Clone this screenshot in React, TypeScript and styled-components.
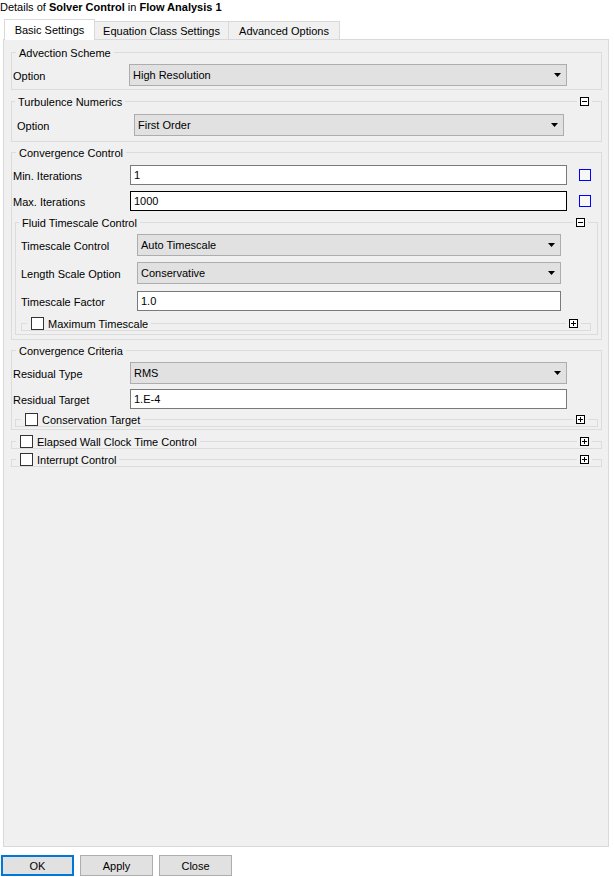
import React from "react";
import styled, { createGlobalStyle } from "styled-components";

const GlobalStyle = createGlobalStyle`
  html, body { margin: 0; padding: 0; background: #ffffff; }
  body {
    font-family: "Liberation Sans", Arial, sans-serif;
    font-size: 11px;
    color: #000000;
    overflow: hidden;
  }
  * { box-sizing: border-box; }
`;

const Page = styled.div`
  width: 614px;
  height: 877px;
  display: flex;
  flex-direction: column;
`;

const Heading = styled.div`
  height: 19px;
  line-height: 14px;
  white-space: nowrap;
  b { font-weight: bold; }
`;

const TabBar = styled.div`
  display: flex;
  align-items: flex-end;
  height: 20px;
  padding-left: 4px;
`;

const Tab = styled.div<{ $active?: boolean; $w: number }>`
  position: relative;
  z-index: ${(p) => (p.$active ? 1 : 0)};
  width: ${(p) => p.$w}px;
  height: ${(p) => (p.$active ? 21 : 18)}px;
  margin-bottom: ${(p) => (p.$active ? -1 : 0)}px;
  margin-left: ${(p) => (p.$active ? 0 : -1)}px;
  padding-bottom: ${(p) => (p.$active ? 1 : 0)}px;
  background: ${(p) => (p.$active ? "#ffffff" : "#f0f0f0")};
  border: 1px solid #d9d9d9;
  border-bottom: none;
  display: flex;
  align-items: center;
  justify-content: center;
  white-space: nowrap;
`;

const Panel = styled.div`
  margin-left: 3px;
  width: 606px;
  height: 808px;
  border: 1px solid #d9d9d9;
  background: #f0f0f0;
  padding: 0 6px 0 7px;
  display: flex;
  flex-direction: column;
`;

const Frame = styled.div<{ $mt?: number; $ml?: number; $mr?: number; $pb?: number }>`
  border: 1px solid #dcdcdc;
  margin: ${(p) => p.$mt ?? 0}px ${(p) => p.$mr ?? 0}px 0 ${(p) => p.$ml ?? 0}px;
  padding-bottom: ${(p) => p.$pb ?? 0}px;
  display: flex;
  flex-direction: column;
`;

const Header = styled.div<{ $ml: number }>`
  display: flex;
  align-items: center;
  justify-content: space-between;
  height: 13px;
  margin: -7px 9px 0 ${(p) => p.$ml}px;
`;

const Caption = styled.span`
  background: #f0f0f0;
  padding: 1px 3px 0;
  height: 13px;
  line-height: 13px;
  white-space: nowrap;
`;

const CheckCaption = styled.label`
  display: flex;
  align-items: center;
  gap: 4px;
  background: #f0f0f0;
  padding: 0 3px 0 4px;
  height: 13px;
  white-space: nowrap;
`;

const CheckText = styled.span`
  line-height: 13px;
  padding-top: 1px;
`;

const CheckBox = styled.span`
  width: 13px;
  height: 13px;
  flex: none;
  background: #ffffff;
  border: 1px solid #333333;
`;

const ToggleWrap = styled.span`
  display: flex;
  align-items: center;
  background: #f0f0f0;
  padding: 0 3px;
  height: 13px;
`;

const Row = styled.div<{ $mt: number; $pl: number; $pr: number }>`
  display: flex;
  align-items: center;
  margin-top: ${(p) => p.$mt}px;
  padding: 0 ${(p) => p.$pr}px 0 ${(p) => p.$pl}px;
`;

const Label = styled.span<{ $w: number }>`
  width: ${(p) => p.$w}px;
  flex: none;
  white-space: nowrap;
  padding-top: 1px;
`;

const Select = styled.div`
  flex: 1;
  height: 22px;
  background: #e1e1e1;
  border: 1px solid #adadad;
  display: flex;
  align-items: center;
  justify-content: space-between;
  padding: 0 5px 0 3px;
  white-space: nowrap;
`;

const TextInput = styled.input<{ $focus?: boolean }>`
  flex: 1;
  min-width: 0;
  height: 20px;
  margin: 0;
  background: #ffffff;
  border: 1px solid ${(p) => (p.$focus ? "#000000" : "#7a7a7a")};
  padding: 0 3px;
  font: inherit;
  color: #000000;
  outline: none;
`;

const BlueBox = styled.span`
  width: 12px;
  height: 12px;
  flex: none;
  margin-left: 12px;
  border: 1px solid #0000ff;
  background: #f7f7f7;
`;

const ButtonRow = styled.div`
  display: flex;
  gap: 6px;
  padding-left: 1px;
  margin-top: 8px;
`;

const PushButton = styled.button<{ $default?: boolean }>`
  width: 73px;
  height: 21px;
  margin: 0;
  padding: 0;
  background: #e1e1e1;
  border: ${(p) => (p.$default ? "2px solid #0078d7" : "1px solid #adadad")};
  font: inherit;
  color: #000000;
`;

const Arrow = () => (
  <svg width="7" height="4" viewBox="0 0 7 4">
    <polygon points="0,0 7,0 3.5,4" fill="#000" />
  </svg>
);

const Toggle = ({ open }: { open: boolean }) => (
  <ToggleWrap>
    <svg width="9" height="9" viewBox="0 0 9 9">
      <rect x="0.5" y="0.5" width="8" height="8" fill="#ffffff" stroke="#000" />
      <line x1="2" y1="4.5" x2="7" y2="4.5" stroke="#000" />
      {!open && <line x1="4.5" y1="2" x2="4.5" y2="7" stroke="#000" />}
    </svg>
  </ToggleWrap>
);

const SelectField = ({ value }: { value: string }) => (
  <Select>
    <span>{value}</span>
    <Arrow />
  </Select>
);

const CollapsedGroup = ({
  title,
  mt,
  ml,
  mr,
  hl,
}: {
  title: string;
  mt: number;
  ml: number;
  mr: number;
  hl: number;
}) => (
  <Frame $mt={mt} $ml={ml} $mr={mr}>
    <Header $ml={hl}>
      <CheckCaption>
        <CheckBox />
        <CheckText>{title}</CheckText>
      </CheckCaption>
      <Toggle open={false} />
    </Header>
  </Frame>
);

export default function App() {
  return (
    <Page>
      <GlobalStyle />
      <Heading>
        Details of <b>Solver Control</b> in <b>Flow Analysis 1</b>
      </Heading>
      <TabBar>
        <Tab $active $w={91}>Basic Settings</Tab>
        <Tab $w={135}>Equation Class Settings</Tab>
        <Tab $w={112}>Advanced Options</Tab>
      </TabBar>
      <Panel>
        {/* Advection Scheme */}
        <Frame $mt={12} $pb={3}>
          <Header $ml={4}>
            <Caption>Advection Scheme</Caption>
          </Header>
          <Row $mt={5} $pl={1} $pr={34}>
            <Label $w={116}>Option</Label>
            <SelectField value="High Resolution" />
          </Row>
        </Frame>

        {/* Turbulence Numerics */}
        <Frame $mt={11} $pb={5}>
          <Header $ml={3}>
            <Caption>Turbulence Numerics</Caption>
            <Toggle open />
          </Header>
          <Row $mt={6} $pl={5} $pr={37}>
            <Label $w={117}>Option</Label>
            <SelectField value="First Order" />
          </Row>
        </Frame>

        {/* Convergence Control */}
        <Frame $mt={10} $pb={4}>
          <Header $ml={4}>
            <Caption>Convergence Control</Caption>
          </Header>
          <Row $mt={6} $pl={1} $pr={10}>
            <Label $w={117}>Min. Iterations</Label>
            <TextInput readOnly value="1" />
            <BlueBox />
          </Row>
          <Row $mt={6} $pl={1} $pr={10}>
            <Label $w={117}>Max. Iterations</Label>
            <TextInput readOnly $focus value="1000" />
            <BlueBox />
          </Row>

          <Frame $mt={11} $ml={3} $mr={3} $pb={3}>
            <Header $ml={3}>
              <Caption>Fluid Timescale Control</Caption>
              <Toggle open />
            </Header>
            <Row $mt={5} $pl={5} $pr={36}>
              <Label $w={116}>Timescale Control</Label>
              <SelectField value="Auto Timescale" />
            </Row>
            <Row $mt={6} $pl={5} $pr={36}>
              <Label $w={116}>Length Scale Option</Label>
              <SelectField value="Conservative" />
            </Row>
            <Row $mt={7} $pl={5} $pr={36}>
              <Label $w={116}>Timescale Factor</Label>
              <TextInput readOnly value="1.0" />
            </Row>
            <CollapsedGroup title="Maximum Timescale" mt={12} ml={5} mr={6} hl={5} />
          </Frame>
        </Frame>

        {/* Convergence Criteria */}
        <Frame $mt={10} $pb={2}>
          <Header $ml={4}>
            <Caption>Convergence Criteria</Caption>
          </Header>
          <Row $mt={5} $pl={1} $pr={34}>
            <Label $w={117}>Residual Type</Label>
            <SelectField value="RMS" />
          </Row>
          <Row $mt={5} $pl={1} $pr={34}>
            <Label $w={117}>Residual Target</Label>
            <TextInput readOnly value="1.E-4" />
          </Row>
          <CollapsedGroup title="Conservation Target" mt={10} ml={3} mr={3} hl={5} />
        </Frame>

        <CollapsedGroup title="Elapsed Wall Clock Time Control" mt={11} ml={0} mr={0} hl={4} />
        <CollapsedGroup title="Interrupt Control" mt={10} ml={0} mr={0} hl={4} />
      </Panel>
      <ButtonRow>
        <PushButton $default>OK</PushButton>
        <PushButton>Apply</PushButton>
        <PushButton>Close</PushButton>
      </ButtonRow>
    </Page>
  );
}
